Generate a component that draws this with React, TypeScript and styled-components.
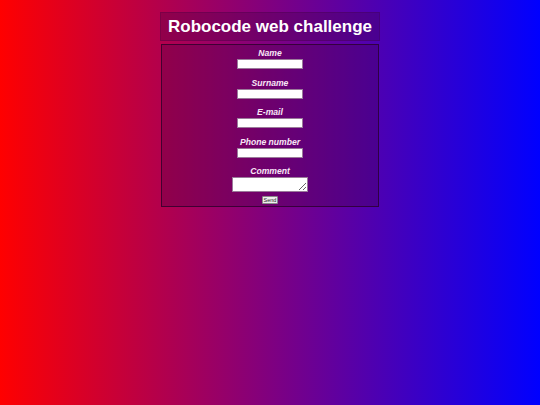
import { FC } from "react";
import styled, { createGlobalStyle } from "styled-components";

const GlobalStyle = createGlobalStyle`
    html, body {
        margin: 0;
        padding: 0;
        height: 100%;
    }
    body {
        background: linear-gradient(to right, #ff0000, #0000ff);
        font-family: "Liberation Sans", Arial, sans-serif;
    }
`;

const FIELDS = ["Name", "Surname", "E-mail", "Phone number"];

const Page = styled.div`
    width: 540px;
    height: 405px;
    display: flex;
    flex-direction: column;
    align-items: center;
    padding-top: 12px;
    box-sizing: border-box;
`;

const TitleBox = styled.div`
    width: 220px;
    height: 29px;
    display: flex;
    align-items: center;
    justify-content: center;
    background-color: rgba(70, 0, 70, 0.3);
    border: 1px solid rgba(60, 0, 60, 0.25);
    box-sizing: border-box;
`;

const Title = styled.h1`
    margin: 0;
    font-size: 17px;
    font-weight: bold;
    color: #ffffff;
`;

const Form = styled.form`
    width: 218px;
    margin-top: 3px;
    padding: 3px 0 2px;
    display: flex;
    flex-direction: column;
    align-items: center;
    background-color: rgba(70, 0, 70, 0.3);
    border: 1px solid rgba(40, 0, 40, 0.75);
    box-sizing: border-box;
`;

const Group = styled.div`
    display: flex;
    flex-direction: column;
    align-items: center;
    margin-bottom: 8.5px;
`;

const Label = styled.label`
    font-size: 8.6px;
    line-height: 11px;
    font-weight: bold;
    font-style: italic;
    color: #f8e6f6;
`;

const Input = styled.input`
    width: 66px;
    height: 10px;
    padding: 0;
    border: 1px solid #9a7a9a;
    background: #ffffff;
    box-sizing: border-box;
`;

const TextArea = styled.textarea`
    width: 76px;
    height: 15px;
    padding: 0;
    border: 1px solid #9a7a9a;
    background: #ffffff;
    box-sizing: border-box;
    resize: both;
    display: block;
`;

const SendButton = styled.button`
    margin-top: -4.5px;
    height: 8px;
    padding: 0 1px;
    font-size: 5.5px;
    line-height: 6px;
    font-family: "Liberation Sans", Arial, sans-serif;
    color: #222;
    background: #efefef;
    border: 1px solid #8a8a8a;
    border-radius: 1px;
`;

const App: FC = () => {
    return (
        <>
            <GlobalStyle />
            <Page>
                <TitleBox>
                    <Title>Robocode web challenge</Title>
                </TitleBox>
                <Form onSubmit={(e) => e.preventDefault()}>
                    {FIELDS.map((f) => (
                        <Group key={f}>
                            <Label>{f}</Label>
                            <Input type="text" />
                        </Group>
                    ))}
                    <Group>
                        <Label>Comment</Label>
                        <TextArea />
                    </Group>
                    <SendButton type="submit">Send</SendButton>
                </Form>
            </Page>
        </>
    );
};

export default App;
